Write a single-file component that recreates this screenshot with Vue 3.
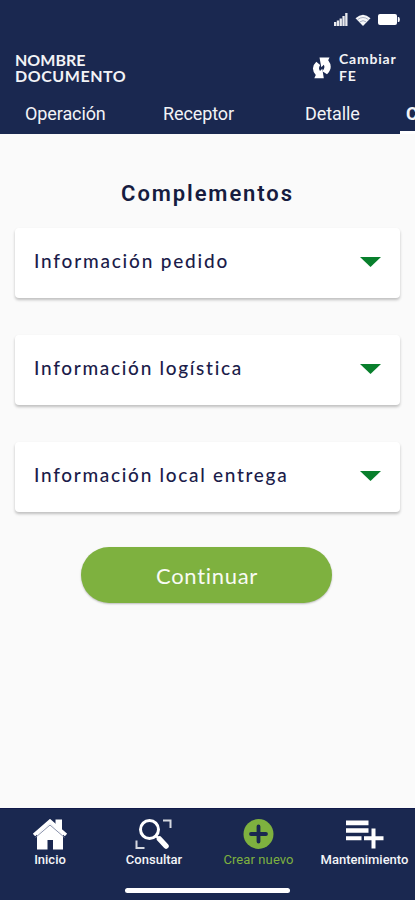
<template>
  <div class="screen">
    <header class="header">
      <div class="status-bar">
        <svg width="14" height="13" viewBox="0 0 14 13" fill="#e9eaee">
          <path d="M0 9h2.300v4H0zM2.800 7.500h2.300V13h-2.300zM5.600 5.500h2.300V13h-2.300zM8.400 3h2.300v10h-2.300zM11.200 0h2.300v13h-2.300z" />
        </svg>
        <svg width="16" height="12" viewBox="0 0 16 12">
          <path d="M0.500 4.200Q8-2.800 15.500 4.200L8 12z" fill="#f5f6f8" />
          <path d="M2.600 5.600Q8 1.400 13.400 5.600M4.800 7.900Q8 5.400 11.200 7.900" fill="none" stroke="#8a92aa" stroke-width="0.700" />
        </svg>
        <svg width="22" height="11" viewBox="0 0 22 11" fill="#fff">
          <rect width="19" height="11" rx="2" />
          <path d="M19.800 3h.8q1.200 0 1.200 2.500T20.600 8h-.8z" />
        </svg>
      </div>
      <div class="title-row">
        <div class="doc-name">
          <div class="doc-line">NOMBRE</div>
          <div>DOCUMENTO</div>
        </div>
        <div class="switch">
          <svg class="switch-icon" width="20" height="22" viewBox="0 0 20 22" fill="#fff">
            <path d="M7.500 0.500H17.500L16.200 3.200Q21.800 10.500 15 17.300L10.300 14.200Q13.600 11 11.800 7.800L9.300 10.300Z" />
            <path d="M4.300 4.800L8.200 8Q5.900 11.200 8 13.900L10.300 11.700 11.800 21.300H2.300L3.800 18Q-2.200 11 4.300 4.800Z" />
          </svg>
          <span class="switch-text">Cambiar<br />FE</span>
        </div>
      </div>
      <nav class="tabs">
        <span v-for="tab in tabs" :key="tab.label" class="tab" :class="{ active: tab.active }">
          {{ tab.label }}
        </span>
      </nav>
    </header>

    <main class="content">
      <h1 class="heading">Complementos</h1>
      <div class="cards">
        <div v-for="section in sections" :key="section.label" class="card">
          <span :class="section.name">{{ section.label }}</span>
          <svg width="21" height="10" viewBox="0 0 21 10">
            <path d="M0 0h21L10.500 10z" fill="#087f2c" />
          </svg>
        </div>
      </div>
      <button class="continue" type="button">Continuar</button>
    </main>

    <footer class="footer">
      <div class="nav">
        <div class="nav-item home">
          <svg width="36" height="32" viewBox="0 0 36 32" fill="#fff">
            <path d="M5 15L18 4 31 15V30.500H21V21H15.500V30.500H5Z" />
            <path d="M23.500 0.500H30V12H23.500z" />
            <path d="M2 16L18 2.200 34 16" fill="none" stroke="#fff" stroke-width="3.600" />
            <path d="M3.500 18.500L18 6 32.500 18.500" fill="none" stroke="#7d86a2" stroke-width="0.900" />
          </svg>
          <span>Inicio</span>
        </div>
        <div class="nav-item search">
          <svg width="38" height="32" viewBox="0 0 38 32" fill="none">
            <circle cx="14.500" cy="10.500" r="9" stroke="#fff" stroke-width="3" />
            <path d="M20.500 16.500L25 20.500" stroke="#fff" stroke-width="2.500" />
            <path d="M24.500 20L31 27" stroke="#fff" stroke-width="5.500" stroke-linecap="round" />
            <path d="M28 1.500H35.500V9M1.500 21.500V29H9.500" stroke="#d5d8e0" stroke-width="2" />
          </svg>
          <span>Consultar</span>
        </div>
        <div class="nav-item create">
          <svg width="32" height="32" viewBox="0 0 32 32">
            <circle cx="15.500" cy="15" r="15" fill="#7eb13f" />
            <path d="M15.500 7.500V22.500M8 15H23" stroke="#1a2850" stroke-width="3.800" stroke-linecap="round" />
          </svg>
          <span>Crear nuevo</span>
        </div>
        <div class="nav-item manage">
          <svg width="38" height="32" viewBox="0 0 38 32" fill="#fff">
            <path d="M0 1.500H22.500V6.200H0zM0 9.300H22.500V13.700H0zM0 17.200H15.500V21.200H0z" />
            <path d="M25.500 9.500H29.500V17.200H37.500V21.200H29.500V29.500H25.500V21.200H18V17.200H25.500z" />
          </svg>
          <span>Mantenimiento</span>
        </div>
      </div>
      <div class="home-indicator"></div>
    </footer>
  </div>
</template>

<script setup>
const tabs = [
  { label: 'Operación' },
  { label: 'Receptor' },
  { label: 'Detalle' },
  { label: 'Complementos', active: true }
];

const sections = [
  { name: 'order', label: 'Información pedido' },
  { name: 'logistics', label: 'Información logística' },
  { name: 'delivery', label: 'Información local entrega' }
];
</script>

<style>
body {
  margin: 0;
}
</style>

<style scoped>
.screen {
  display: flex;
  flex-direction: column;
  width: 415px;
  height: 900px;
  overflow: hidden;
  background: #fafafa;
  font-family: Lato, sans-serif;
}

svg {
  display: block;
  flex: none;
}

.header {
  height: 134px;
  flex: none;
  box-sizing: border-box;
  background: #1a2850;
  color: #f2f3f6;
}

.status-bar {
  display: flex;
  align-items: center;
  justify-content: flex-end;
  gap: 7px;
  height: 39px;
  padding-right: 15px;
}

.title-row {
  display: flex;
  justify-content: space-between;
  height: 57px;
  padding: 13px 18px 0 15px;
  box-sizing: border-box;
}

.doc-name {
  font-size: 16px;
  font-weight: 700;
  line-height: 16px;
  letter-spacing: 0.55px;
}

.doc-line {
  letter-spacing: 0;
}

.switch {
  display: flex;
  gap: 7px;
}

.switch-icon {
  margin-top: 5px;
}

.switch-text {
  width: 58px;
  margin-top: -2px;
  font-size: 14px;
  font-weight: 700;
  line-height: 17px;
  letter-spacing: 0.8px;
  white-space: nowrap;
}

.tabs {
  display: flex;
  height: 38px;
  padding-left: 25px;
  font-family: Roboto, sans-serif;
  font-size: 18px;
  line-height: 36px;
  letter-spacing: -0.1px;
}

.tab {
  flex: none;
}

.tab:nth-child(1) {
  width: 138px;
}

.tab:nth-child(2) {
  width: 142px;
}

.tab:nth-child(3) {
  width: 95px;
}

.tab.active {
  box-sizing: border-box;
  padding-left: 6px;
  border-bottom: 3px solid #fff;
  font-weight: 700;
}

.content {
  display: flex;
  flex: 1;
  flex-direction: column;
  align-items: center;
}

.heading {
  margin: 44px 0 19px;
  color: #161c40;
  font-family: Roboto, sans-serif;
  font-size: 22px;
  font-weight: 600;
  line-height: 31px;
  letter-spacing: 1.9px;
}

.cards {
  display: flex;
  flex-direction: column;
  gap: 37px;
  width: 385px;
}

.card {
  display: flex;
  align-items: center;
  justify-content: space-between;
  height: 70px;
  padding: 0 19px;
  box-sizing: border-box;
  border-radius: 4px;
  background: #fff;
  box-shadow: 0 2px 3px rgba(0, 0, 0, 0.24);
  color: #1b1c4a;
  font-size: 19px;
  font-weight: 500;
  letter-spacing: 1.7px;
}

.card span {
  margin-top: -5px;
}

.card .order {
  letter-spacing: 1.8px;
}

.card svg {
  margin-top: -2px;
}

.continue {
  width: 251px;
  height: 56px;
  margin: 35px 2px 0 0;
  padding: 1px 0 0 1px;
  border: 0;
  border-radius: 28px;
  background: #7eb13f;
  box-shadow: 0 1px 2px rgba(0, 0, 0, 0.25);
  color: #f8fbf4;
  font-family: Lato, sans-serif;
  font-size: 22px;
  font-weight: 400;
  letter-spacing: 0.7px;
}

.footer {
  display: flex;
  flex-direction: column;
  align-items: center;
  justify-content: space-between;
  height: 92px;
  padding: 10px 0 7px;
  box-sizing: border-box;
  border-top: 1px solid #10194a;
  background: #1a2850;
}

.nav {
  display: flex;
  width: 100%;
}

.nav-item {
  display: flex;
  flex: none;
  flex-direction: column;
  align-items: center;
  color: #f4f5f8;
  font-family: Roboto, sans-serif;
  font-size: 13px;
  font-weight: 500;
  line-height: 17px;
  white-space: nowrap;
}

.home {
  width: 100px;
}

.search {
  width: 108px;
}

.create {
  width: 101px;
  color: #7eb13f;
  font-weight: 400;
  letter-spacing: 0.1px;
}

.manage {
  width: 111px;
}

.home-indicator {
  width: 165px;
  height: 5px;
  border-radius: 3px;
  background: #fff;
}
</style>
